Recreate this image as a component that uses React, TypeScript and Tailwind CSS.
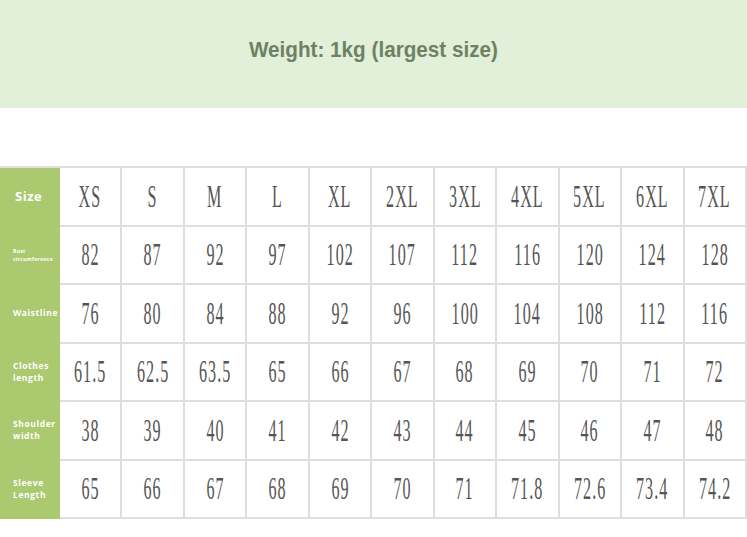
const sizes = ['XS', 'S', 'M', 'L', 'XL', '2XL', '3XL', '4XL', '5XL', '6XL', '7XL']

const rows: { label: string[]; small?: boolean; values: string[] }[] = [
  { label: ['Bust', 'circumference'], small: true, values: ['82', '87', '92', '97', '102', '107', '112', '116', '120', '124', '128'] },
  { label: ['Waistline'], values: ['76', '80', '84', '88', '92', '96', '100', '104', '108', '112', '116'] },
  { label: ['Clothes', 'length'], values: ['61.5', '62.5', '63.5', '65', '66', '67', '68', '69', '70', '71', '72'] },
  { label: ['Shoulder', 'width'], values: ['38', '39', '40', '41', '42', '43', '44', '45', '46', '47', '48'] },
  { label: ['Sleeve', 'Length'], values: ['65', '66', '67', '68', '69', '70', '71', '71.8', '72.6', '73.4', '74.2'] },
]

function Cell({ children }: { children: React.ReactNode }) {
  return (
    <div className="h-[58.5px] border-r-2 border-b-2 border-[#dedede] flex items-center justify-center overflow-hidden">
      <span className="inline-block scale-x-[0.52] text-[31px] tracking-[2px] leading-none text-[#555] font-['Liberation_Serif',serif] whitespace-nowrap">
        {children}
      </span>
    </div>
  )
}

function Label({ lines, small, big }: { lines: string[]; small?: boolean; big?: boolean }) {
  return (
    <div className="h-[58.5px] bg-[#abc96f] border-b-2 border-[#abc96f] flex flex-col justify-center pl-[13px] text-white font-bold font-['Open_Sans',sans-serif] overflow-hidden">
      {lines.map((l) => (
        <span
          key={l}
          className={
            big
              ? 'text-[13px] leading-none tracking-[0.5px] pl-[2px]'
              : small
                ? 'text-[5px] leading-[8px] tracking-[0.3px]'
                : 'text-[8.5px] leading-[12px] tracking-[0.6px]'
          }
        >
          {l}
        </span>
      ))}
    </div>
  )
}

export default function App() {
  return (
    <div className="w-[747px] h-[537px] bg-white overflow-hidden">
      <div className="h-[108px] bg-[#e2efd9] flex items-center justify-center pb-[10px]">
        <span className="inline-block scale-x-[0.94] text-[22px] font-bold text-[#6d8264] font-['Liberation_Sans',sans-serif]">
          Weight: 1kg (largest size)
        </span>
      </div>
      <div className="mt-[58px] border-t-2 border-[#dedede] grid grid-cols-[60px_repeat(11,1fr)]">
        <Label lines={['Size']} big />
        {sizes.map((s) => (
          <Cell key={s}>{s}</Cell>
        ))}
        {rows.map((r) => (
          <>
            <Label key={r.label.join()} lines={r.label} small={r.small} />
            {r.values.map((v, i) => (
              <Cell key={r.label.join() + i}>{v}</Cell>
            ))}
          </>
        ))}
      </div>
    </div>
  )
}
